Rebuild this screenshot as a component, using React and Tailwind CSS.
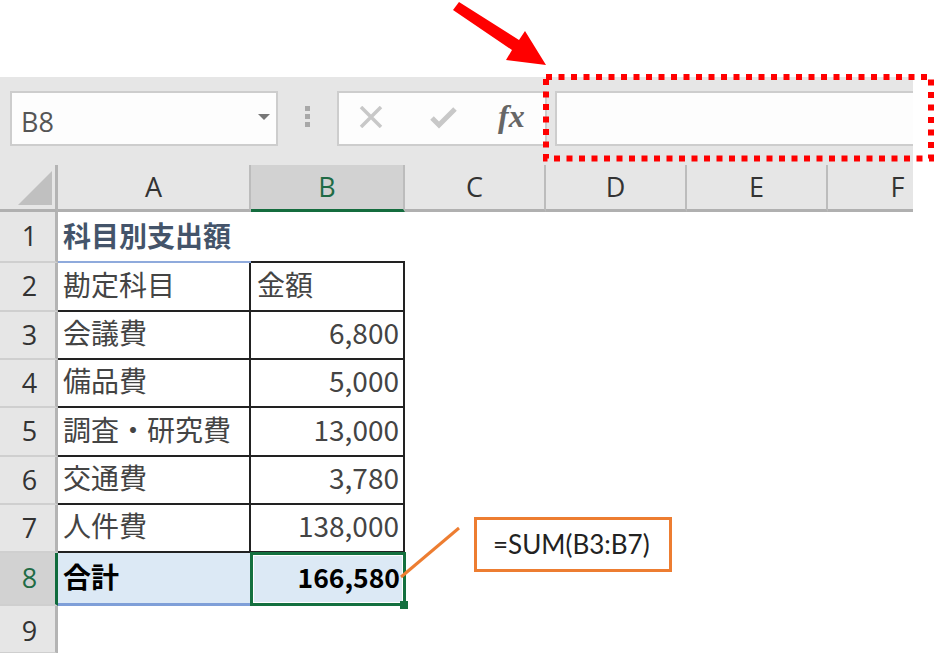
const cellFont = "[font-family:'Noto_Sans_CJK_JP','Noto_Sans',sans-serif]";

const rows = [
  { n: 2, h: 'h-[49px]', a: '勘定科目', b: '金額', left: true },
  { n: 3, h: 'h-[48px]', a: '会議費', b: '6,800' },
  { n: 4, h: 'h-[48px]', a: '備品費', b: '5,000' },
  { n: 5, h: 'h-[49px]', a: '調査・研究費', b: '13,000' },
  { n: 6, h: 'h-[48px]', a: '交通費', b: '3,780' },
  { n: 7, h: 'h-[48px]', a: '人件費', b: '138,000' },
];

function RowHead({ n, active, className }) {
  return (
    <div
      className={`w-[58px] shrink-0 flex items-center justify-center pl-1 border-r-[3px] border-b-2 border-b-[#cfcfcf] text-[27px] [font-family:'Open_Sans',sans-serif] ${
        active ? 'bg-[#d2d2d2] border-r-[#0f6b3c] text-[#1f6b45]' : 'bg-[#e6e6e6] border-r-[#b4b4b4] text-[#333]'
      } ${className || ''}`}
    >
      {n}
    </div>
  );
}

function ColHead({ label, w, active }) {
  return (
    <div
      className={`${w} shrink-0 flex items-center justify-center text-[27px] [font-family:'Open_Sans',sans-serif] border-r-2 border-r-[#bcbcbc] border-b-[3px] ${
        active ? 'bg-[#d2d2d2] border-b-[#146c3e] text-[#1f6b45]' : 'bg-[#e6e6e6] border-b-[#b0b0b0] text-[#333]'
      }`}
    >
      {label}
    </div>
  );
}

export default function App() {
  return (
    <div className="relative w-[934px] h-[653px] overflow-hidden bg-white pt-[77px]">
      <div className="w-[913px]">
        <div className="h-[88px] bg-[#e6e6e6] flex items-start pt-[14px] pl-[10px]">
          <div className="w-[268px] h-[55px] bg-[#fdfdfd] border-2 border-[#cdcdcd] flex items-center justify-between pl-[9px] pr-[6px] text-[27px] text-[#555] [font-family:'Open_Sans',sans-serif]">
            <span className="pt-[7px]">B8</span>
            <span className="w-0 h-0 border-x-[6px] border-x-transparent border-t-[6px] border-t-[#777] mb-[3px]" />
          </div>
          <div className="w-[59px] h-[55px] flex flex-col items-center justify-center gap-[3px] pb-[4px]">
            <span className="w-[5px] h-[5px] bg-[#a8a8a8]" />
            <span className="w-[5px] h-[5px] bg-[#a8a8a8]" />
            <span className="w-[5px] h-[5px] bg-[#a8a8a8]" />
          </div>
          <div className="w-[210px] h-[55px] bg-[#fdfdfd] border-2 border-[#cdcdcd] flex items-center pl-[20px]">
            <svg width="24" height="22" viewBox="0 0 24 22" className="text-[#c8c8c8] mb-[4px]">
              <path d="M2 1L22 21M22 1L2 21" stroke="currentColor" strokeWidth="3.5" fill="none" />
            </svg>
            <svg width="27" height="22" viewBox="0 0 27 22" className="ml-[47px] text-[#c8c8c8] mb-[1px]">
              <path d="M2 11L9 18L25 2" stroke="currentColor" strokeWidth="5" fill="none" />
            </svg>
            <span className="ml-[41px] pb-[6px] text-[32px] leading-none font-bold italic text-[#666] [font-family:'Liberation_Serif',serif]">fx</span>
          </div>
          <div className="w-[8px]" />
          <div className="w-[358px] h-[55px] bg-[#fdfdfd] border-y-2 border-l-2 border-[#cdcdcd]" />
        </div>

        <div className="flex h-[47px] overflow-hidden">
          <div className="w-[58px] shrink-0 bg-[#e6e6e6] border-r-[3px] border-r-[#b4b4b4] border-b-[3px] border-b-[#b0b0b0] flex items-start pt-[6px] pl-[18px]">
            <div className="w-[34px] h-[34px] bg-[#c0c0c0] [clip-path:polygon(100%_0,100%_100%,0_100%)]" />
          </div>
          <ColHead label="A" w="w-[193px]" />
          <ColHead label="B" w="w-[154px]" active />
          <ColHead label="C" w="w-[141px]" />
          <ColHead label="D" w="w-[141px]" />
          <ColHead label="E" w="w-[141px]" />
          <ColHead label="F" w="w-[141px]" />
        </div>

        <div className={cellFont}>
          <div className="flex h-[51px]">
            <RowHead n={1} />
            <div className="w-[193px] border-b-2 border-b-[#8faadc] flex items-center pl-[5px] pb-[4px] text-[28px] font-bold text-[#44546a] whitespace-nowrap">科目別支出額</div>
            <div className="w-[154px] border-b-2 border-b-[#222]" />
          </div>
          {rows.map((r) => (
            <div key={r.n} className={`flex ${r.h}`}>
              <RowHead n={r.n} />
              <div className="w-[193px] border-b-2 border-r-2 border-[#222] flex items-center pl-[5px] pb-[6px] text-[28px] text-[#444] whitespace-nowrap">{r.a}</div>
              <div
                className={`w-[154px] border-b-2 border-r-2 border-[#222] flex items-center pb-[6px] text-[28px] text-[#444] ${
                  r.left ? 'justify-start pl-[6px]' : 'justify-end pr-[4px]'
                }`}
              >
                {r.b}
              </div>
            </div>
          ))}
          <div className="flex h-[53px]">
            <RowHead n={8} active />
            <div className="w-[193px] bg-[#dce9f5] border-b-[3px] border-b-[#7f9fd8] flex items-center pl-[5px] pb-[4px] text-[28px] font-bold text-black">合計</div>
            <div className="relative w-[156px] h-[54px] -ml-px -mt-px bg-[#dce9f5] border-[3px] border-[#14703f] outline outline-1 -outline-offset-4 outline-white flex items-center justify-end pr-[3px] pb-[5px] text-[26.5px] font-bold text-black">
              166,580
              <span className="absolute right-[-5px] bottom-[-6px] w-[8px] h-[8px] bg-[#14703f]" />
            </div>
          </div>
          <div className="flex h-[48px]">
            <RowHead n={9} className="border-b-0 pt-[4px]" />
          </div>
        </div>
      </div>

      <svg className="absolute left-0 top-0 pointer-events-none" width="934" height="653" viewBox="0 0 934 653">
        <polygon points="459,2 519,40 525,31 546,65 506,60 512,50 453,10" fill="#ff0000" />
        <rect x="546" y="77" width="385" height="81.5" fill="none" stroke="#ff0000" strokeWidth="6" strokeDasharray="6 6.5" />
        <line x1="459" y1="528" x2="401" y2="577" stroke="#ed7d31" strokeWidth="3" />
      </svg>

      <div className="absolute left-[474px] top-[517px] w-[198px] h-[55px] border-[3px] border-[#ed7d31] flex items-center pl-[16px] text-[26px] text-[#222] [font-family:'Lato',sans-serif]">
        =SUM(B3:B7)
      </div>
    </div>
  );
}
